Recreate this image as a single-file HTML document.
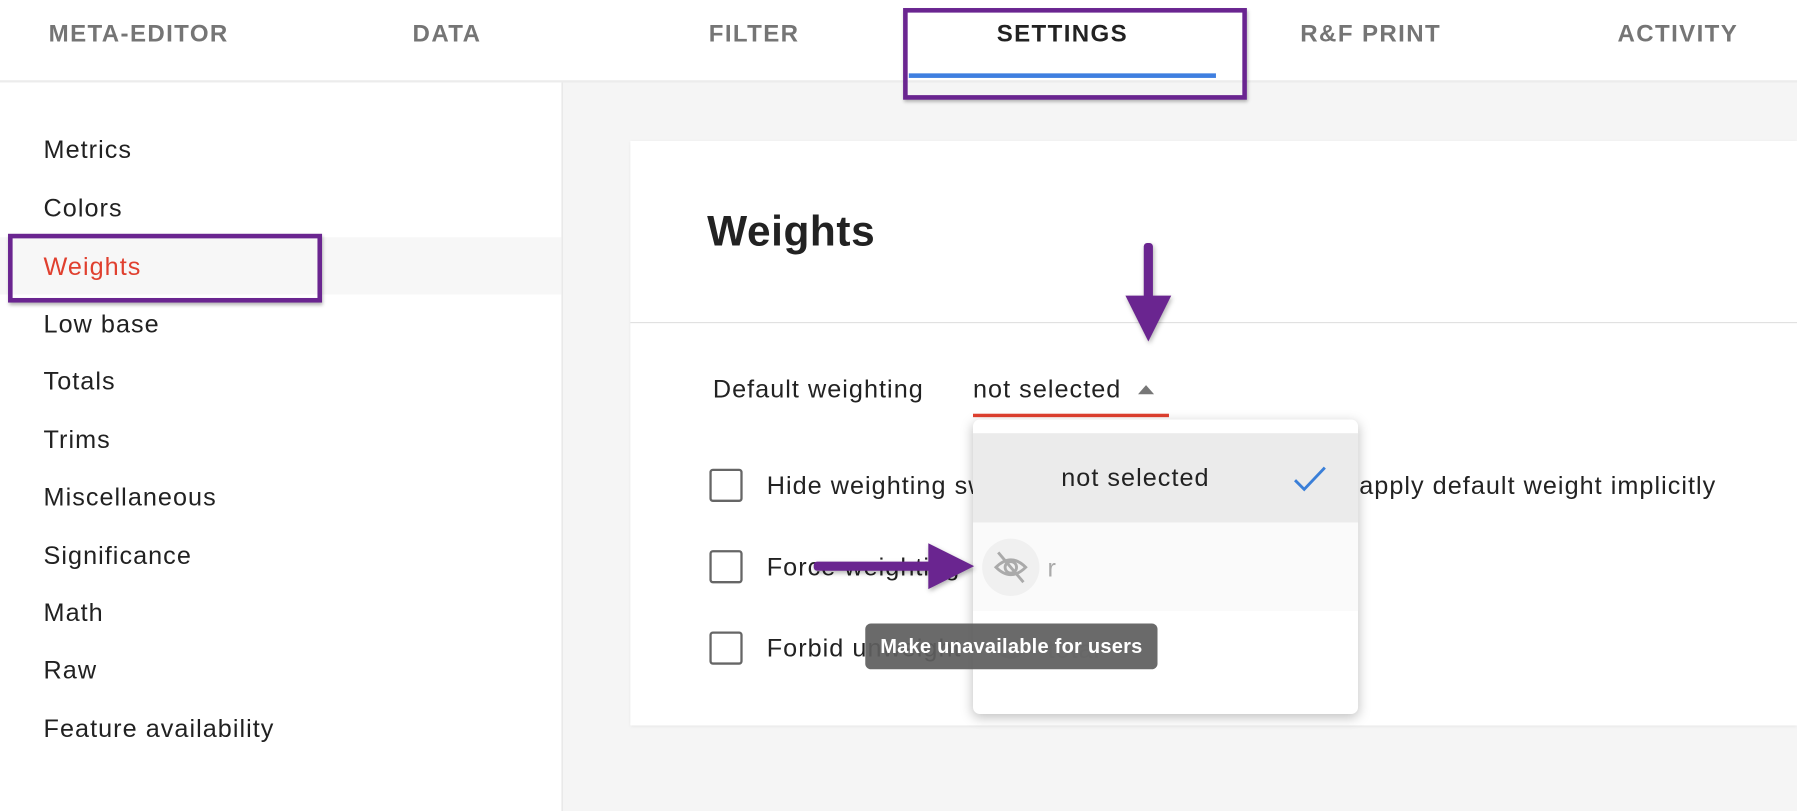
<!DOCTYPE html>
<html><head><meta charset="utf-8"><style>
html,body{margin:0;padding:0;width:1797px;height:811px;overflow:hidden;background:#f5f5f5;font-family:"Liberation Sans",sans-serif}
#w{position:absolute;left:0;top:0;width:1568px;height:708px;transform:scale(1.14605);transform-origin:0 0;background:#f5f5f5}
.a{position:absolute}
.tab{position:absolute;top:18px;width:240px;margin-left:-120px;text-align:center;font-size:21px;font-weight:bold;color:#757575;letter-spacing:1.2px}
.nav{position:absolute;left:38px;font-size:22px;color:#212121;line-height:24px;letter-spacing:.9px}
.cb{position:absolute;left:619px;width:25px;height:25px;border:2.5px solid #666;border-radius:3px}
.t{position:absolute;font-size:22px;color:#222;line-height:24px;letter-spacing:.9px}
</style></head><body><div id="w">
<div class="a" style="left:0;top:0;width:1568px;height:70px;background:#fff;border-bottom:2px solid #ececec"></div>
<div class="tab" style="left:121px">META-EDITOR</div>
<div class="tab" style="left:390px">DATA</div>
<div class="tab" style="left:658px">FILTER</div>
<div class="tab" style="left:927px;color:#222">SETTINGS</div>
<div class="tab" style="left:1196px">R&amp;F PRINT</div>
<div class="tab" style="left:1464px">ACTIVITY</div>
<div class="a" style="left:793px;top:64px;width:268px;height:4px;background:#3f7fe0"></div>
<div class="a" style="left:788px;top:7px;width:292px;height:72px;border:4px solid #6a2590;box-shadow:1px 2px 3px rgba(0,0,0,.3)"></div>

<div class="a" style="left:0;top:72px;width:490px;height:636px;background:#fff;border-right:1px solid #e3e3e3"></div>
<div class="a" style="left:0;top:207px;width:490px;height:50px;background:#f7f7f7"></div>
<div class="nav" style="top:119px">Metrics</div>
<div class="nav" style="top:170px">Colors</div>
<div class="nav" style="top:221px;color:#e0402f">Weights</div>
<div class="nav" style="top:271px">Low base</div>
<div class="nav" style="top:321px">Totals</div>
<div class="nav" style="top:372px">Trims</div>
<div class="nav" style="top:422px">Miscellaneous</div>
<div class="nav" style="top:473px">Significance</div>
<div class="nav" style="top:523px">Math</div>
<div class="nav" style="top:573px">Raw</div>
<div class="nav" style="top:624px">Feature availability</div>
<div class="a" style="left:7px;top:204px;width:266px;height:52px;border:4px solid #6a2590;box-shadow:1px 2px 3px rgba(0,0,0,.3)"></div>

<div class="a" style="left:550px;top:123px;width:1018px;height:510px;background:#fff;box-shadow:0 1px 3px rgba(0,0,0,.08)"></div>
<div class="a" style="left:617px;top:181px;font-size:37px;font-weight:bold;color:#222;letter-spacing:.5px">Weights</div>
<div class="a" style="left:550px;top:281px;width:1018px;height:1px;background:#e0e0e0"></div>
<div class="t" style="left:622px;top:328px">Default weighting</div>
<div class="t" style="left:849px;top:328px">not selected</div>
<div class="a" style="left:993px;top:336px;width:0;height:0;border-left:7px solid transparent;border-right:7px solid transparent;border-bottom:8px solid #777"></div>
<div class="a" style="left:849px;top:361px;width:171px;height:3px;background:#e0402f"></div>

<div class="cb" style="top:409px"></div><div class="t" style="left:669px;top:412px">Hide weighting sw</div>
<div class="t" style="left:1186px;top:412px">apply default weight implicitly</div>
<div class="cb" style="top:480px"></div><div class="t" style="left:669px;top:483px">Force weighting</div>
<div class="cb" style="top:551px"></div><div class="t" style="left:669px;top:554px">Forbid unweight</div>

<div class="a" style="left:849px;top:366px;width:336px;height:257px;background:#fff;border-radius:6px;box-shadow:0 3px 10px rgba(0,0,0,.25)"></div>
<div class="a" style="left:849px;top:378px;width:336px;height:78px;background:#ebebeb"></div>
<div class="t" style="left:926px;top:405px">not selected</div>
<svg class="a" style="left:1128px;top:405px" width="30" height="24"><path d="M2 14 L10 22 L28 3" fill="none" stroke="#3a7fd8" stroke-width="2.5"/></svg>
<div class="a" style="left:849px;top:456px;width:336px;height:77px;background:#fafafa"></div>
<div class="a" style="left:857px;top:470px;width:50px;height:50px;border-radius:50%;background:#f0f0f0"></div>
<svg class="a" style="left:866px;top:480px" width="32" height="30" viewBox="0 0 32 30"><path d="M3 15 Q16 2 29 15 Q16 28 3 15Z" fill="none" stroke="#aaa" stroke-width="2.5"/><circle cx="16" cy="15" r="5" fill="none" stroke="#aaa" stroke-width="2.5"/><path d="M5 2 L27 28" stroke="#aaa" stroke-width="2.5"/></svg>
<div class="t" style="left:914px;top:484px;color:#aaa">r</div>
<div class="t" style="left:914px;top:555px;color:#ccc">total</div>
<svg class="a" style="left:866px;top:552px" width="32" height="30" viewBox="0 0 32 30"><path d="M3 15 Q16 2 29 15 Q16 28 3 15Z" fill="none" stroke="#ccc" stroke-width="2.5"/><circle cx="16" cy="15" r="5" fill="none" stroke="#ccc" stroke-width="2.5"/></svg>
<div class="a" style="left:755px;top:544px;width:255px;height:40px;border-radius:5px;background:rgba(95,95,95,.93);color:#fff;font-weight:bold;font-size:17.5px;line-height:40px;text-align:center;letter-spacing:.2px">Make unavailable for users</div>

<svg class="a" style="left:0;top:0" width="1568" height="708">
<g fill="#6a2590" style="filter:drop-shadow(1px 2px 2px rgba(0,0,0,.3))">
<rect x="998" y="212" width="8" height="50" rx="3"/>
<path d="M982 258 L1022 258 L1002 298Z"/>
<rect x="710" y="490" width="106" height="8" rx="3"/>
<path d="M810 474 L810 514 L850 494Z"/>
</g></svg>
</div></body></html>
